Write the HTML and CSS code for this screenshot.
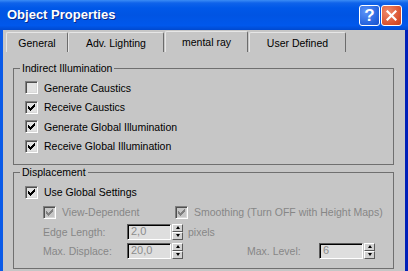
FILE: index.html
```html
<!DOCTYPE html>
<html lang="en">
<head>
  <meta charset="UTF-8" />
  <title>Object Properties</title>
  <link rel="stylesheet" href="styles.css">
</head>
<body>
  <div class="window">
    <div class="titlebar">
      <span class="title">Object Properties</span>
      <div class="title-buttons">
        <button class="tb help">?</button>
        <button class="tb close">
          <svg width="11" height="11" viewBox="0 0 11 11"><path d="M1.5 1.5 L9.5 9.5 M9.5 1.5 L1.5 9.5" stroke="#fff" stroke-width="2.2" stroke-linecap="square"/></svg>
        </button>
      </div>
    </div>

    <div class="content">
      <div class="tabs">
        <div class="tab tab-general">General</div>
        <div class="tab tab-adv">Adv. Lighting</div>
        <div class="tab tab-mr active">mental ray</div>
        <div class="tab tab-user">User Defined</div>
      </div>

      <fieldset class="group">
        <legend>Indirect Illumination</legend>
        <div class="row"><span class="check"></span>Generate Caustics</div>
        <div class="row"><span class="check"><svg class="tick" width="7" height="7" shape-rendering="crispEdges"><path d="M0 2h1v3H0zM1 3h1v3H1zM2 4h1v3H2zM3 3h1v3H3zM4 2h1v3H4zM5 1h1v3H5zM6 0h1v3H6z"/></svg></span>Receive Caustics</div>
        <div class="row"><span class="check"><svg class="tick" width="7" height="7" shape-rendering="crispEdges"><path d="M0 2h1v3H0zM1 3h1v3H1zM2 4h1v3H2zM3 3h1v3H3zM4 2h1v3H4zM5 1h1v3H5zM6 0h1v3H6z"/></svg></span>Generate Global Illumination</div>
        <div class="row"><span class="check"><svg class="tick" width="7" height="7" shape-rendering="crispEdges"><path d="M0 2h1v3H0zM1 3h1v3H1zM2 4h1v3H2zM3 3h1v3H3zM4 2h1v3H4zM5 1h1v3H5zM6 0h1v3H6z"/></svg></span>Receive Global Illumination</div>
      </fieldset>

      <fieldset class="group">
        <legend>Displacement</legend>
        <div class="row row-a"><span class="check"><svg class="tick" width="7" height="7" shape-rendering="crispEdges"><path d="M0 2h1v3H0zM1 3h1v3H1zM2 4h1v3H2zM3 3h1v3H3zM4 2h1v3H4zM5 1h1v3H5zM6 0h1v3H6z"/></svg></span>Use Global Settings</div>
        <div class="row row-b indent disabled">
          <div class="opt"><span class="check"><svg class="tick" width="7" height="7" shape-rendering="crispEdges"><path d="M0 2h1v3H0zM1 3h1v3H1zM2 4h1v3H2zM3 3h1v3H3zM4 2h1v3H4zM5 1h1v3H5zM6 0h1v3H6z"/></svg></span>View-Dependent</div>
          <div class="opt"><span class="check"><svg class="tick" width="7" height="7" shape-rendering="crispEdges"><path d="M0 2h1v3H0zM1 3h1v3H1zM2 4h1v3H2zM3 3h1v3H3zM4 2h1v3H4zM5 1h1v3H5zM6 0h1v3H6z"/></svg></span>Smoothing (Turn OFF with Height Maps)</div>
        </div>
        <div class="row row-c indent disabled">
          <span class="field-label">Edge Length:</span>
          <span class="input">2,0</span>
          <span class="spinner"><span class="up"></span><span class="down"></span></span>
          <span class="unit">pixels</span>
        </div>
        <div class="row row-c indent disabled">
          <span class="field-label">Max. Displace:</span>
          <span class="input">20,0</span>
          <span class="spinner"><span class="up"></span><span class="down"></span></span>
          <span class="field-label level-label">Max. Level:</span>
          <span class="input">6</span>
          <span class="spinner"><span class="up"></span><span class="down"></span></span>
        </div>
      </fieldset>
    </div>
  </div>
</body>
</html>
```

FILE: styles.css
```css
* {
  box-sizing: border-box;
}

body {
  margin: 0;
  font-family: 'Liberation Sans', Arial, sans-serif;
  font-size: 10.5px;
  color: #000;
  background: #c6c6c6;
}

.window {
  width: 408px;
  height: 271px;
  overflow: hidden;
  background: #c6c6c6;
}

.titlebar {
  height: 30px;
  display: flex;
  align-items: flex-start;
  justify-content: space-between;
  padding: 0 6px 0 7px;
  background: linear-gradient(#3b8cf5 0, #0f63ea 3px, #0058e8 8px, #0054e3 50%, #0058ec 85%, #0049cf 100%);
}

.title {
  margin-top: 7px;
  font-size: 13px;
  font-weight: bold;
  color: #fff;
  text-shadow: 1px 1px 0 #0a2a8a;
  line-height: 16px;
}

.title-buttons {
  display: flex;
  gap: 1px;
  margin-top: 5px;
}

.tb {
  width: 21px;
  height: 21px;
  padding: 0;
  border: 1px solid #fff;
  border-radius: 3px;
  display: flex;
  align-items: center;
  justify-content: center;
  color: #fff;
}

.help {
  background: radial-gradient(circle at 30% 30%, #5b93f8, #2462dd 70%, #1a4fc8);
  font-family: 'Liberation Sans', Arial, sans-serif;
  font-size: 17px;
  font-weight: bold;
  line-height: 1;
}

.close {
  background: radial-gradient(circle at 30% 30%, #ef8a6c, #d9502c 70%, #c2401e);
}

.content {
  height: 241px;
  border-left: 3px solid #0a5ae8;
  border-right: 3px solid #0020b8;
  padding-top: 1px;
}

.tabs {
  display: flex;
  align-items: flex-end;
  height: 21px;
  padding-left: 3px;
}

.tab {
  height: 20px;
  display: flex;
  align-items: center;
  justify-content: center;
  border-top: 1px solid #e6e6e6;
  border-left: 1px solid #e6e6e6;
  border-right: 1px solid #6c6c6c;
  border-radius: 2px 2px 0 0;
}

.tab-general { width: 62px; }
.tab-adv { width: 96px; }
.tab-mr { width: 83px; margin-left: 1px; }
.tab-user { width: 97px; margin-left: 1px; }

.tab.active {
  height: 21px;
}

.group {
  margin: 10px 11px 0 10px;
  padding: 4px 0 8px 0;
  border: 1px solid #6f6f6f;
  min-width: 0;
}

.group + .group {
  margin-top: 1px;
}

.group legend {
  margin-left: 6px;
  padding: 0 2px;
  line-height: 12px;
}

.row {
  height: 19.5px;
  display: flex;
  align-items: center;
  padding-left: 11px;
}

.row-a, .row-b { height: 20px; }
.row-c { height: 19px; }

.indent {
  padding-left: 29px;
}

.check {
  width: 13px;
  height: 13px;
  margin-right: 6px;
  padding: 2px 0 0 2px;
  flex: none;
  border: 1px solid;
  border-color: #808080 #fff #fff #808080;
  box-shadow: inset 1px 1px 0 #505050, inset -1px -1px 0 #d8d8d8;
  background: #e2e2e2;
}

.tick {
  display: block;
  fill: #000;
}

.disabled {
  color: #868686;
}

.disabled .check {
  background: #c6c6c6;
}

.disabled .tick {
  fill: #808080;
}

.opt {
  display: flex;
  align-items: center;
}

.opt:first-child {
  width: 132px;
}

.field-label {
  width: 84px;
}

.level-label {
  margin-left: 64px;
  width: 72px;
}

.input {
  width: 44px;
  height: 16px;
  padding-left: 3px;
  line-height: 13px;
  border: 1px solid;
  border-color: #5a5a5a #fff #fff #5a5a5a;
  box-shadow: inset 1px 1px 0 #000;
  background: #dedede;
  color: #8c8c8c;
  font-size: 11px;
}

.spinner {
  width: 11px;
  height: 16px;
  margin-left: 1px;
  display: flex;
  flex-direction: column;
}

.spinner span {
  flex: 1;
  display: flex;
  align-items: center;
  justify-content: center;
  border: 1px solid;
  border-color: #fff #5a5a5a #5a5a5a #fff;
  background: #d2d2d2;
}

.spinner .up::after,
.spinner .down::after {
  content: "";
  border-left: 2.5px solid transparent;
  border-right: 2.5px solid transparent;
}

.spinner .up::after {
  border-bottom: 3px solid #000;
}

.spinner .down::after {
  border-top: 3px solid #000;
}

.unit {
  margin-left: 5px;
}
```
